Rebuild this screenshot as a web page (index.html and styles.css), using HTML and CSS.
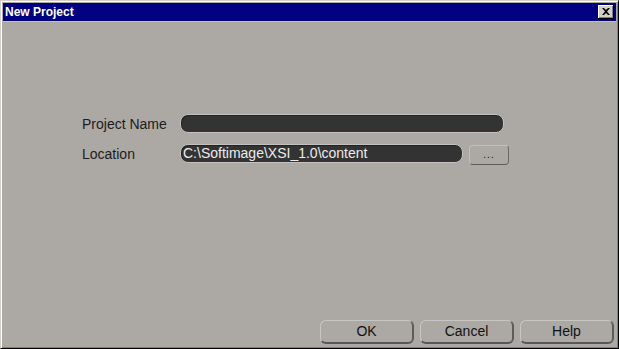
FILE: index.html
```html
<!DOCTYPE html>
<html>
<head>
<meta charset="utf-8">
<link rel="stylesheet" href="styles.css">
</head>
<body>
<div class="window">
  <div class="titlebar">
    <span class="title">New Project</span>
    <span class="close"><svg width="8" height="7" viewBox="0 0 8 7"><path d="M0 0h2l2 2 2-2h2L5 3.5 8 7H6L4 5 2 7H0l3-3.5z" fill="#000"/></svg></span>
  </div>
  <div class="sep"></div>
  <div class="content">
    <div class="form">
      <div class="row">
        <label class="lbl">Project Name</label>
        <div class="field wide"></div>
      </div>
      <div class="row">
        <label class="lbl">Location</label>
        <div class="field loc">C:\Softimage\XSI_1.0\content</div>
        <div class="browse">...</div>
      </div>
    </div>
    <div class="buttons">
      <div class="btn">OK</div>
      <div class="btn">Cancel</div>
      <div class="btn">Help</div>
    </div>
  </div>
</div>
</body>
</html>
```
FILE: styles.css
```css
* { box-sizing: border-box; }
html, body { margin: 0; padding: 0; }
body { width: 619px; height: 349px; overflow: hidden; background: #aca9a5; font-family: "Liberation Sans", Arial, sans-serif; }
.window {
  width: 619px; height: 349px;
  border-top: 1px solid #d4d0c8; border-left: 1px solid #d4d0c8;
  border-right: 1px solid #000; border-bottom: 1px solid #000;
  display: flex; flex-direction: column;
  box-shadow: inset 1px 1px 0 #fff, inset -1px -1px 0 #808080;
  padding: 2px;
}
.window > * { flex-shrink: 0; }
.titlebar {
  height: 18px; background: #000080; color: #fff;
  display: flex; align-items: center; justify-content: space-between;
  padding: 0 2px;
}
.title { font-weight: bold; font-size: 12px; }
.close {
  width: 16px; height: 14px; background: #d4d0c8;
  box-shadow: inset -1px -1px 0 #000, inset 1px 1px 0 #fff, inset -2px -2px 0 #808080;
  display: flex; align-items: center; justify-content: center;
  padding-right: 1px; padding-bottom: 1px;
}
.sep { height: 1px; background: #c6c3bf; }
.content { flex: 1; display: flex; flex-direction: column; }
.form { padding: 92px 0 0 79px; display: flex; flex-direction: column; gap: 11px; }
.row { display: flex; align-items: center; height: 19px; }
.lbl { width: 98px; font-size: 14px; color: #1c1c1c; }
.field {
  height: 19px; background: #333333; border-radius: 8px;
  border: 1px solid #c4c2c0; box-shadow: inset 1px 1px 0 #222;
  color: #ececec; font-size: 14px; line-height: 17px; padding-left: 2px;
}
.wide { width: 324px; }
.loc { width: 283px; }
.browse {
  margin-left: 6px; width: 40px; height: 20px; margin-top: 2px;
  border-radius: 4px;
  border: 1px solid #c2c0bd; border-right-color: #6a6866; border-bottom-color: #5e5c5a;
  font-size: 10px; color: #111; text-align: center; line-height: 17px; letter-spacing: 1px;
}
.buttons { margin-top: auto; display: flex; justify-content: flex-end; gap: 6px; padding: 0 2px 2px 0; }
.btn {
  width: 94px; height: 24px; border-radius: 6px;
  border: 1px solid #c8c6c3; border-right: 2px solid #5e5c5a; border-bottom: 2px solid #5a5856;
  font-size: 14px; color: #111; text-align: center; line-height: 21px;
}
```
